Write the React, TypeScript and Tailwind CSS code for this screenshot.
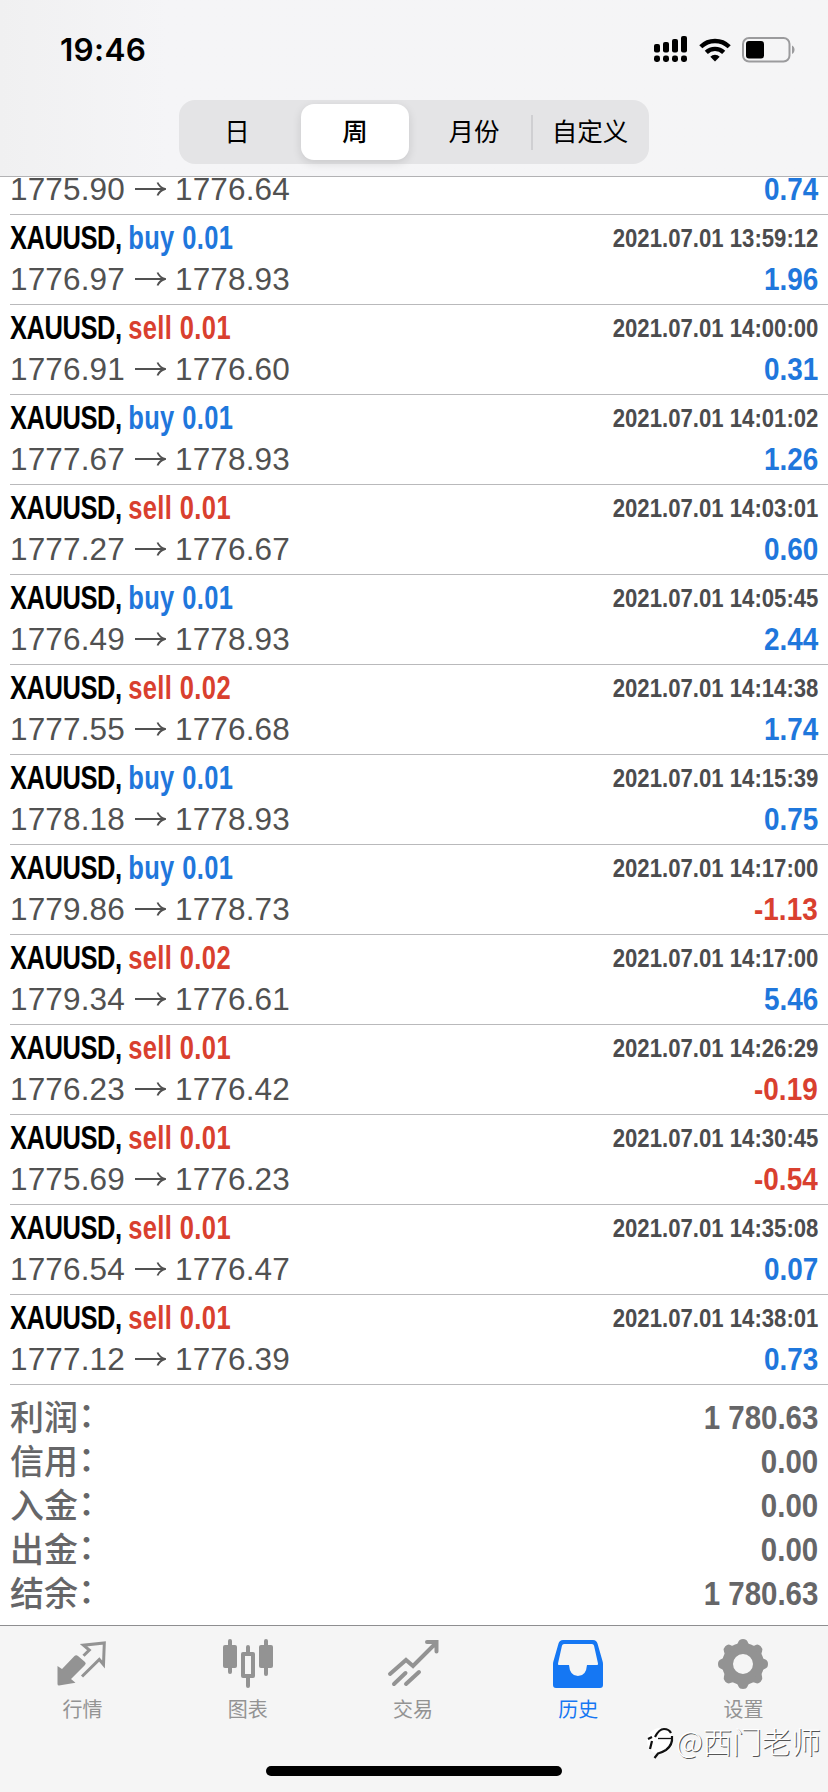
import React from "react";
import { clsx } from "clsx";

interface Deal {
    side: "buy" | "sell";
    lots: string;
    open: string;
    close: string;
    time: string;
    profit: string;
}

const deals: Deal[] = [
    { side: "buy", lots: "0.01", open: "1776.97", close: "1778.93", time: "2021.07.01 13:59:12", profit: "1.96" },
    { side: "sell", lots: "0.01", open: "1776.91", close: "1776.60", time: "2021.07.01 14:00:00", profit: "0.31" },
    { side: "buy", lots: "0.01", open: "1777.67", close: "1778.93", time: "2021.07.01 14:01:02", profit: "1.26" },
    { side: "sell", lots: "0.01", open: "1777.27", close: "1776.67", time: "2021.07.01 14:03:01", profit: "0.60" },
    { side: "buy", lots: "0.01", open: "1776.49", close: "1778.93", time: "2021.07.01 14:05:45", profit: "2.44" },
    { side: "sell", lots: "0.02", open: "1777.55", close: "1776.68", time: "2021.07.01 14:14:38", profit: "1.74" },
    { side: "buy", lots: "0.01", open: "1778.18", close: "1778.93", time: "2021.07.01 14:15:39", profit: "0.75" },
    { side: "buy", lots: "0.01", open: "1779.86", close: "1778.73", time: "2021.07.01 14:17:00", profit: "-1.13" },
    { side: "sell", lots: "0.02", open: "1779.34", close: "1776.61", time: "2021.07.01 14:17:00", profit: "5.46" },
    { side: "sell", lots: "0.01", open: "1776.23", close: "1776.42", time: "2021.07.01 14:26:29", profit: "-0.19" },
    { side: "sell", lots: "0.01", open: "1775.69", close: "1776.23", time: "2021.07.01 14:30:45", profit: "-0.54" },
    { side: "sell", lots: "0.01", open: "1776.54", close: "1776.47", time: "2021.07.01 14:35:08", profit: "0.07" },
    { side: "sell", lots: "0.01", open: "1777.12", close: "1776.39", time: "2021.07.01 14:38:01", profit: "0.73" },
];

const totals = [
    { label: "利润", value: "1 780.63" },
    { label: "信用", value: "0.00" },
    { label: "入金", value: "0.00" },
    { label: "出金", value: "0.00" },
    { label: "结余", value: "1 780.63" },
];

function StatusBar() {
    return (
        <div className="flex h-[100px] items-center justify-between pl-[60px] pr-[32px]">
            <span className="font-['Inter'] text-[31.5px] font-semibold leading-none tracking-[0.3px]">19:46</span>
            <div className="-mt-px flex items-center">
                <svg width="34" height="27" viewBox="0 0 34 27">
                    <rect x="0" y="8" width="6" height="8.5" rx="2" />
                    <rect x="9" y="6" width="6" height="10.5" rx="2" />
                    <rect x="18" y="3" width="6" height="13.5" rx="2" />
                    <rect x="27" y="0" width="6" height="16.5" rx="2" />
                    <rect x="0" y="19.5" width="6" height="6.5" rx="2.4" />
                    <rect x="9" y="19.5" width="6" height="6.5" rx="2.4" />
                    <rect x="18" y="19.5" width="6" height="6.5" rx="2.4" />
                    <rect x="27" y="19.5" width="6" height="6.5" rx="2.4" />
                </svg>
                <svg className="ml-[11px]" width="32" height="24" viewBox="0 0 32 24">
                    <g fill="none" stroke="black" strokeWidth="4.4">
                        <path d="M1.8 8.8a20.2 20.2 0 0 1 28.4 0" />
                        <path d="M7.3 14.4a12.4 12.4 0 0 1 17.4 0" />
                    </g>
                    <path d="M16 23.5l-4.7-4.8a6.8 6.8 0 0 1 9.4 0z" />
                </svg>
                <svg className="ml-[11px]" width="54" height="26" viewBox="0 0 54 26">
                    <rect x="1" y="1" width="46.5" height="23.5" rx="6" fill="none" stroke="#9b9b9d" strokeWidth="2" />
                    <rect x="4" y="4" width="18" height="17.5" rx="3" />
                    <path d="M50 8.5c3.4 1.2 3.4 7.3 0 8.5z" fill="#9b9b9d" />
                </svg>
            </div>
        </div>
    );
}

function PeriodPicker() {
    return (
        <div className="mx-auto flex h-[64px] w-[470px] items-center rounded-[16px] bg-[#e4e4e6] px-[4px] font-['Noto_Sans_CJK_SC'] text-[25.5px]">
            <div className="w-[108px] pb-[3px] text-center">日</div>
            <div className="ml-[10px] flex h-[56px] w-[108px] items-center justify-center rounded-[13px] bg-white pb-[3px] font-medium shadow-[0_3px_10px_rgba(0,0,0,0.12)]">
                周
            </div>
            <div className="flex-1 pb-[3px] pl-[8px] text-center">月份</div>
            <div className="h-[35px] w-[2px] bg-[#cfcfd2]" />
            <div className="w-[112px] pb-[3px] pl-[2px] text-center">自定义</div>
        </div>
    );
}

function PriceLine({ open, close, profit }: { open: string; close: string; profit: string }) {
    return (
        <div className="flex items-center justify-between">
            <div className="-mt-[2px] flex items-center font-['Liberation_Sans'] text-[31.5px] leading-[36px] tracking-[0.15px] text-[#515151]">
                <span className="w-[115px]">{open}</span>
                <svg className="ml-[10px] mr-[9px]" width="31" height="16" viewBox="0 0 31 16" fill="none" stroke="#515151" strokeWidth="1.9">
                    <path d="M0 8h30M22.5 1.5c1.5 3.5 4 5.5 7.5 6.5c-3.5 1-6 3-7.5 6.5" />
                </svg>
                <span>{close}</span>
            </div>
            <span
                className={clsx(
                    "inline-block origin-right scale-x-90 font-['Liberation_Sans'] text-[31px] font-bold leading-[36px]",
                    profit.startsWith("-") ? "text-[#d9402f]" : "text-[#1f77dc]",
                )}
            >
                {profit}
            </span>
        </div>
    );
}

function DealRow({ deal }: { deal: Deal }) {
    return (
        <div className="ml-[10px] h-[90px] border-b border-[#b9b9bb] pr-[10px] pt-[4px]">
            <div className="flex h-[43px] items-start justify-between font-['Liberation_Sans'] font-bold">
                <span className="inline-block origin-left scale-x-[0.785] whitespace-nowrap text-[32.5px] leading-[38px] tracking-[-0.6px] text-black">
                    XAUUSD,{" "}
                    <span className={clsx("tracking-[0.5px]", deal.side === "buy" ? "text-[#1f77dc]" : "text-[#d9402f]")}>
                        {deal.side} {deal.lots}
                    </span>
                </span>
                <span className="inline-block origin-right scale-x-[0.852] whitespace-nowrap text-[26px] leading-[38px] text-[#4c4c4e]">{deal.time}</span>
            </div>
            <PriceLine open={deal.open} close={deal.close} profit={deal.profit} />
        </div>
    );
}

function QuotesIcon() {
    return (
        <svg width="52" height="52" viewBox="1 0 52 52" fill="#939393">
            <path d="M1.5 28L6 31L18 18.5q2-2 4-.5l7 6q1.5 1.5 0 3L15 41l4.5 3.7L3 47.5q-1.5 0-1.5-1.5z" />
            <path d="M27.5 17.7L33.3 12L27.5 7.2L48.3 5L47.5 26.5L43.3 21.5L26 38.5" fill="none" stroke="#939393" strokeWidth="3" />
        </svg>
    );
}

function ChartIcon() {
    return (
        <svg width="52" height="52" viewBox="0 0 52 52" fill="#939393">
            <rect x="1" y="7" width="14" height="23" rx="2" />
            <rect x="6" y="1" width="4" height="35" rx="2" />
            <rect x="37" y="7" width="14" height="23" rx="2" />
            <rect x="42" y="1" width="4" height="37" rx="2" />
            <path d="M24 9q0-2 2-2t2 2v5h3q2 0 2 2v22q0 2-2 2h-3v8q0 2-2 2t-2-2v-8h-3q-2 0-2-2V16q0-2 2-2h3zM23 18v18h6V18z" fillRule="evenodd" />
        </svg>
    );
}

function TradeIcon() {
    return (
        <svg width="52" height="52" viewBox="0 0 52 52" fill="none" stroke="#939393" strokeWidth="4" strokeLinecap="round">
            <path d="M3 36L19 22l7 6L49 5M40 4h9.5v9.5M7 46l11.5-11M19 46l13-12" />
        </svg>
    );
}

function HistoryIcon() {
    return (
        <svg width="52" height="52" viewBox="0 0 52 52">
            <path
                fillRule="evenodd"
                fill="#1577f3"
                d="M11 2h30q3.5 0 4.5 3.5L50.5 23q.5 1.5.5 3v21q0 3-3 3H4q-3 0-3-3V26q0-1.5.5-3l5-17.5Q7.5 2 11 2zM12 6q-1.500 0-2 1.500L6 25.500q-.3 1.500 1 1.500h10q.8 11 9 11t9-11h10q1.300 0 1-1.500L42 7.500Q41.500 6 40 6z"
            />
        </svg>
    );
}

function SettingsIcon() {
    const teeth = [0, 45, 90, 135, 180, 225, 270, 315];
    return (
        <svg width="52" height="52" viewBox="0 0 52 52">
            <circle cx="26" cy="26" r="15.5" fill="none" stroke="#939393" strokeWidth="11" />
            {teeth.map((a) => (
                <path key={a} d="M17 8q3.5-1 4.5-4.5Q22.5 1 26 1t4.5 2.5Q31.5 7 35 8z" fill="#939393" transform={`rotate(${a} 26 26)`} />
            ))}
        </svg>
    );
}

const tabs = [
    { label: "行情", icon: QuotesIcon },
    { label: "图表", icon: ChartIcon },
    { label: "交易", icon: TradeIcon },
    { label: "历史", icon: HistoryIcon, active: true },
    { label: "设置", icon: SettingsIcon },
];

function Watermark() {
    return (
        <div className="absolute left-[646px] top-[1720px] flex items-center font-['Noto_Sans_CJK_SC'] text-[29.5px] font-light leading-[40px] text-white [text-shadow:1px_1px_0_#555]">
            <svg className="mt-[6px]" width="30" height="34" viewBox="0 0 30 34" fill="none" stroke="#111" strokeWidth="2.2">
                <circle cx="14" cy="15" r="13" fill="white" stroke="none" />
                <path d="M2 13l4-2M6 15l-2 8M9 11Q13 3 18 3t7 4M26 10Q27 19 20 24q-4 2.5-8 3.5l-3.5 4.5" />
                <path d="M12 12.5h14" strokeWidth="1.3" />
            </svg>
            <span>@西门老师</span>
        </div>
    );
}

export default function App() {
    return (
        <div className="relative flex h-[1792px] w-[828px] flex-col overflow-hidden bg-white text-black">
            <header className="h-[177px] shrink-0 border-b border-[#b2b2b4] bg-linear-to-r from-[#f0f0f1] via-[#f5f5f7] via-20% to-[#f5f5f6]">
                <StatusBar />
                <PeriodPicker />
            </header>

            <main className="flex-1">
                {/* oldest visible deal, its title line is scrolled under the header */}
                <div className="ml-[10px] flex h-[38px] flex-col justify-end border-b border-[#b9b9bb] pb-[6px] pr-[10px]">
                    <PriceLine open="1775.90" close="1776.64" profit="0.74" />
                </div>
                {deals.map((d) => (
                    <DealRow key={d.time + d.side} deal={d} />
                ))}
                <div className="px-[10px] pt-[10px] text-[#666668]">
                    {totals.map((t) => (
                        <div key={t.label} className="flex h-[44px] items-center justify-between">
                            <span className="-mt-[2px] flex font-['Noto_Sans_CJK_SC'] text-[34px] font-medium leading-[44px]">
                                {t.label}
                                <span className="-mt-[3px]">：</span>
                            </span>
                            <span className="mt-px inline-block origin-right scale-x-[0.88] whitespace-nowrap font-['Liberation_Sans'] text-[33.5px] font-bold leading-[44px]">
                                {t.value}
                            </span>
                        </div>
                    ))}
                </div>
            </main>

            <nav className="flex h-[167px] shrink-0 flex-col items-center border-t border-[#8e8e90] bg-[#f5f5f5]">
                <div className="flex h-[140px] w-full pr-[2px]">
                    {tabs.map(({ label, icon: Icon, active }) => (
                        <div
                            key={label}
                            className={clsx(
                                "flex flex-1 flex-col items-center pt-[12px] font-['Noto_Sans_CJK_SC'] text-[20px] leading-[38px]",
                                active ? "text-[#1577f3]" : "text-[#939393]",
                            )}
                        >
                            <Icon />
                            {label}
                        </div>
                    ))}
                </div>
                <div className="h-[10px] w-[296px] shrink-0 rounded-full bg-black" />
            </nav>

            <Watermark />
        </div>
    );
}
